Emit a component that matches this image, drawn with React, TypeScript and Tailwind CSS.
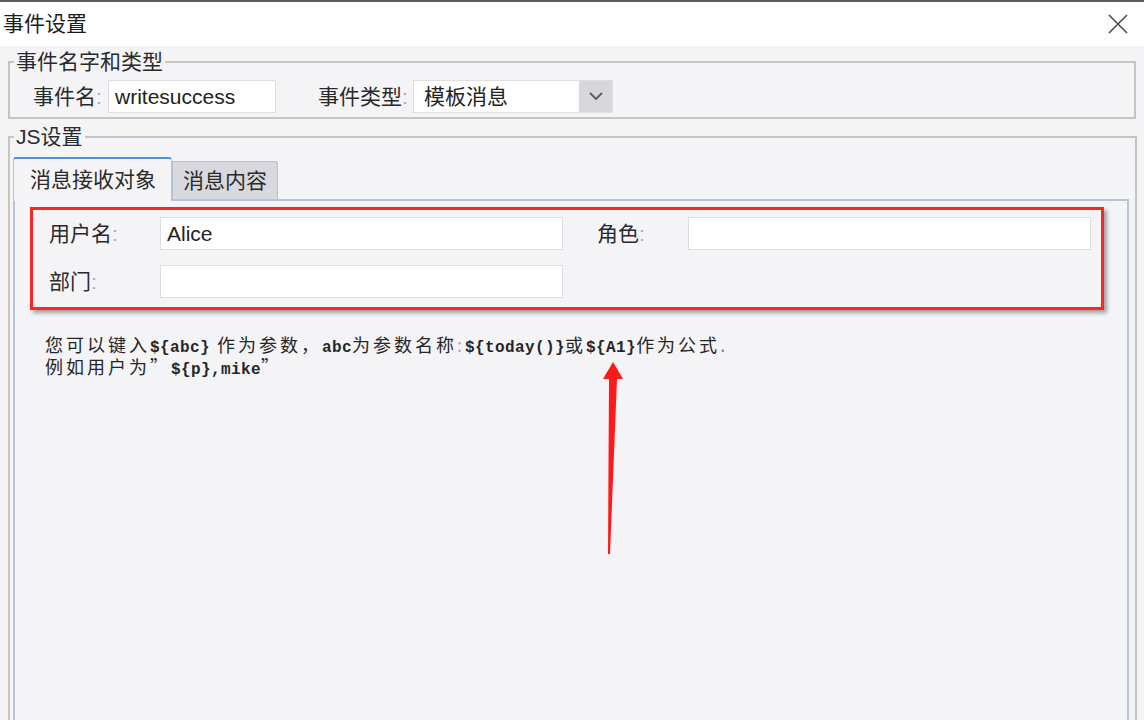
import React from "react";

const Colon = () => <span className="text-[#b3a3c6]">:</span>;

const Field = ({ value = "", w = "w-[403px]" }: { value?: string; w?: string }) => (
  <div
    className={`${w} h-[33px] bg-white border border-[#dedee2] flex items-center px-[6px] text-[21px] text-[#222]`}
  >
    {value}
  </div>
);

const Mono = ({ children }: { children: React.ReactNode }) => (
  <span className="font-['Liberation_Mono',monospace] font-bold text-[16px] leading-[16px] tracking-[0.4px]">
    {children}
  </span>
);

export default function App() {
  return (
    <div className="relative w-[1144px] h-[720px] overflow-hidden bg-[#f4f4f7] border-t-2 border-[#5b5b5b] font-['Liberation_Sans','Noto_Sans_CJK_SC',sans-serif] text-[#2a2a2a]">
      {/* title bar */}
      <div className="h-[44px] bg-white flex items-center justify-between pl-[3px] pr-[16px]">
        <span className="text-[21px] text-[#1c1c1c]">事件设置</span>
        <svg width="20" height="20" viewBox="0 0 20 20">
          <path d="M1 1 L19 19 M19 1 L1 19" stroke="#4a4a4a" strokeWidth="1.6" fill="none" />
        </svg>
      </div>

      <div className="px-[8px]">
        {/* group 1 */}
        <fieldset className="mt-[4px] border-2 border-[#c6c6be]">
          <legend className="ml-[4px] px-[2px] text-[21px] leading-[24px]">事件名字和类型</legend>
          <div className="flex items-center pl-[23px] pt-[6px] pb-[4px]">
            <span className="text-[21px] w-[75px]">
              事件名<Colon />
            </span>
            <Field value="writesuccess" w="w-[168px]" />
            <span className="ml-[42px] w-[95px] text-[21px]">
              事件类型<Colon />
            </span>
            <div className="flex h-[33px] w-[200px] bg-white border border-[#dedee2]">
              <div className="flex-1 flex items-center pl-[10px] text-[21px] text-[#222]">模板消息</div>
              <div className="w-[33px] bg-[#d6d7db] flex items-center justify-center">
                <svg width="14" height="9" viewBox="0 0 14 9">
                  <path d="M1 1 L7 7 L13 1" stroke="#5a5a5a" strokeWidth="1.8" fill="none" />
                </svg>
              </div>
            </div>
          </div>
        </fieldset>

        {/* group 2 */}
        <fieldset className="mt-[6px] border-2 border-[#c6c6be] h-[640px]">
          <legend className="ml-[4px] px-[2px] text-[21px] leading-[24px]">JS设置</legend>
          <div className="pt-[8px] pl-[3px] pr-[6px]">
            <div className="flex items-end">
              <div className="relative z-10 -mb-[2px] w-[159px] h-[44px] bg-[#f4f4f7] border-t-2 border-x border-t-[#4b91e2] border-x-[#b7c3d6] rounded-t-[3px] flex items-center pl-[16px] text-[21px]">
                消息接收对象
              </div>
              <div className="w-[106px] h-[38px] bg-[#d8d9de] border border-b-0 border-[#b4bfd0] rounded-tr-[3px] flex items-center pl-[10px] text-[21px]">
                消息内容
              </div>
            </div>
            <div className="h-[560px] border-2 border-[#b7c3d6] pt-[6px]">
              {/* red annotation box */}
              <div className="ml-[15px] mr-[23px] border-[3px] border-[#ff2424] shadow-[3px_3px_4px_rgba(0,0,0,0.35)] pl-[16px] pr-[10px] pt-[7px] pb-[9px] flex flex-col gap-[15px]">
                <div className="flex items-center">
                  <span className="w-[111px] text-[21px]">
                    用户名<Colon />
                  </span>
                  <Field value="Alice" />
                  <span className="ml-[34px] w-[91px] text-[21px]">
                    角色<Colon />
                  </span>
                  <Field />
                </div>
                <div className="flex items-center">
                  <span className="w-[111px] text-[21px]">
                    部门<Colon />
                  </span>
                  <Field />
                </div>
              </div>

              <div className="mt-[24px] pl-[30px] text-[18px] leading-[21px] tracking-[3px] text-[#262626] font-['Noto_Sans_CJK_SC',sans-serif]">
                <div>
                  您可以键入<Mono>{"${abc}"}</Mono> 作为参数，<Mono>abc</Mono>为参数名称<Colon />
                  <Mono>{"${today()}"}</Mono>或<Mono>{"${A1}"}</Mono>作为公式<span className="text-[#8a7aa8]">.</span>
                </div>
                <div>
                  例如用户为”<Mono>{"${p},mike"}</Mono>”
                </div>
              </div>
            </div>
          </div>
        </fieldset>
      </div>

      {/* red arrow annotation */}
      <svg className="absolute left-[600px] top-[355px]" width="30" height="200" viewBox="0 0 30 200">
        <polygon points="13,5 23,22 17,22 10,197 8,197 9,22 3,22" fill="#ff1a1a" />
      </svg>
    </div>
  );
}
